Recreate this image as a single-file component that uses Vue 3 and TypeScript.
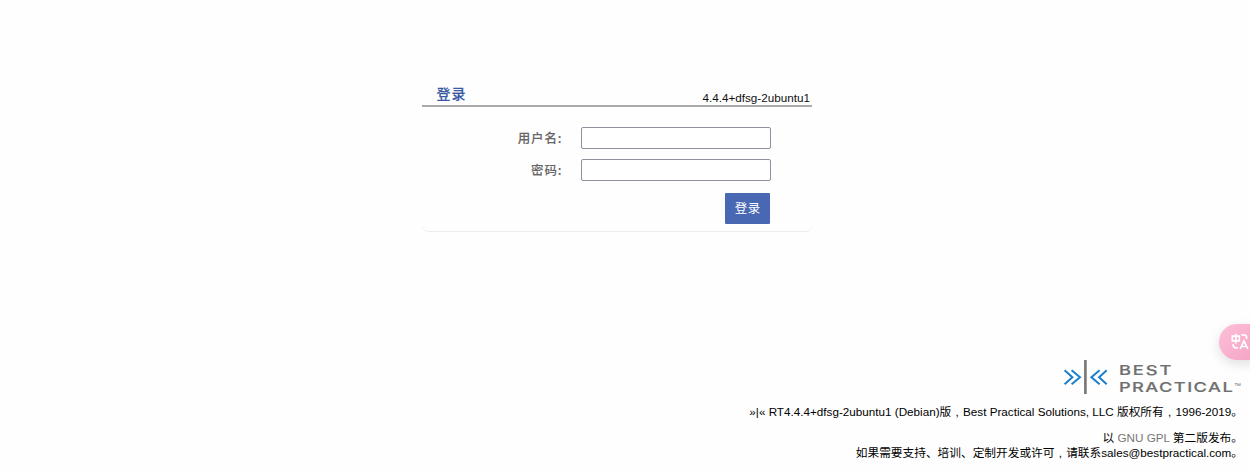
<script setup lang="ts">
import { ref } from 'vue'

const version = '4.4.4+dfsg-2ubuntu1'
const username = ref('')
const password = ref('')
</script>

<template>
  <main class="page">
    <form class="login" @submit.prevent>
      <header class="titlebar">
        <h1>登录</h1>
        <span class="version">{{ version }}</span>
      </header>
      <div class="row">
        <label for="user">用户名:</label>
        <input id="user" v-model="username" type="text" />
      </div>
      <div class="row">
        <label for="pass">密码:</label>
        <input id="pass" v-model="password" type="password" />
      </div>
      <div class="actions"><button type="submit">登录</button></div>
    </form>

    <footer class="footer">
      <svg class="logo" width="180" height="36" viewBox="0 0 180 36">
        <g fill="none" stroke="#1b7fcb" stroke-width="2">
          <path d="M1.6 11.2 9.4 18.2 1.6 25.2M8.6 11.2 17 18.2 8.6 25.2" />
          <path d="M36.6 11.2 28.4 18.2 36.6 25.2M43.7 11.2 36.1 18.2 43.7 25.2" />
        </g>
        <path d="M22.4 1V35" stroke="#757575" stroke-width="2.6" />
        <g class="wordmark">
          <text transform="translate(55.9 16) scale(1.32 1)" textLength="39.7" lengthAdjust="spacing">BEST</text>
          <text transform="translate(55.9 33) scale(1.32 1)" textLength="86.2" lengthAdjust="spacing">PRACTICAL</text>
        </g>
        <text class="tm" x="171" y="28.5">™</text>
      </svg>
      <p class="copyright">»|« RT{{ version }} (Debian)版<span class="comma">,</span>Best Practical Solutions, LLC 版权所有<span class="comma">,</span>1996-2019。</p>
      <p class="license">以 <a>GNU GPL</a> 第二版发布。</p>
      <p class="support">如果需要支持、培训、定制开发或许可<span class="comma">,</span>请联系sales@bestpractical.com。</p>
    </footer>

    <aside class="translate">
      <svg width="18" height="18" viewBox="0 0 18 18" fill="none" stroke="#fff" stroke-width="1.7">
        <path d="M1.3 3.2H8.3V7.8H1.3ZM4.8 .8V10.4" />
        <path d="M11 1.8H12.5Q15.6 1.8 15.6 4.6V5.2M2.2 11.5V12Q2.2 14.8 5 14.8H6.5" stroke-linecap="round" />
        <path d="M9.2 16 13 7.8 16.8 16M10.6 13.5H15.4" />
      </svg>
    </aside>
  </main>
</template>

<style>
body {
  background: #fefefe;
}
</style>

<style scoped>
.page {
  position: relative;
  box-sizing: border-box;
  width: 100%;
  height: 470px;
  padding-top: 79px;
  overflow: hidden;
  color: #111;
  font: 11.7px/15px "Liberation Sans", "Noto Sans CJK SC", sans-serif;
}
.login {
  box-sizing: border-box;
  width: 390px;
  height: 153px;
  margin-left: 422px;
  border-bottom: 1px solid #ececec;
  border-radius: 7px;
}
.titlebar {
  display: flex;
  box-sizing: border-box;
  justify-content: space-between;
  height: 28px;
  margin-bottom: 20px;
  padding: 0 2px 0 14px;
  border-bottom: 2px solid #aaa;
}
h1 {
  margin: 4px 0 0;
  color: #3858a4;
  font: 500 14px/21px "Noto Sans CJK SC", sans-serif;
  letter-spacing: 1px;
  text-indent: 0.5px;
  -webkit-text-stroke: 0.15px;
}
.version {
  margin-top: 11px;
}
.row {
  display: flex;
  height: 22px;
  margin-bottom: 10px;
}
label {
  width: 140.5px;
  margin-right: 18.5px;
  color: #666;
  font: 500 12.5px/22px "Noto Sans CJK SC", sans-serif;
  letter-spacing: 0.9px;
  text-align: right;
  -webkit-text-stroke: 0.1px;
}
input {
  box-sizing: border-box;
  width: 190px;
  height: 22px;
  padding: 1px 2px;
  background: #fff;
  border: 1px solid #8f8f9d;
  border-radius: 2px;
}
.actions {
  display: flex;
  justify-content: flex-end;
  padding: 2px 42px 0 0;
}
button {
  width: 45px;
  height: 31px;
  padding: 0 0 2px;
  color: #fff;
  background: #4868b3;
  border: 0;
  border-radius: 1px;
  font: 400 12.5px/29px "Noto Sans CJK SC", sans-serif;
  letter-spacing: 0.7px;
  text-indent: 0.7px;
}
.footer {
  display: flex;
  flex-direction: column;
  align-items: flex-end;
  margin-top: 127px;
  padding-right: 7px;
}
.logo {
  display: block;
  margin-bottom: 9px;
}
.wordmark {
  fill: #707070;
  stroke: #707070;
  stroke-width: 0.2px;
  font: 500 13.8px Inter, sans-serif;
}
.tm {
  fill: #757575;
  font: 7px "Liberation Sans", sans-serif;
}
p {
  height: 15px;
  margin: 0;
  color: #000;
  white-space: nowrap;
}
.copyright {
  margin-bottom: 11px;
}
a {
  color: #777;
}
.comma {
  display: inline-block;
  width: 11.7px;
  text-align: center;
}
.translate {
  position: absolute;
  top: 324px;
  right: -6px;
  box-sizing: border-box;
  width: 37px;
  height: 36px;
  padding: 9px 0 0 12px;
  background: linear-gradient(135deg, #fdc0d8, #f5a3c5);
  border-radius: 18px 0 0 18px;
  box-shadow: 0 4px 12px rgb(0 0 0 / 12%);
}
</style>
